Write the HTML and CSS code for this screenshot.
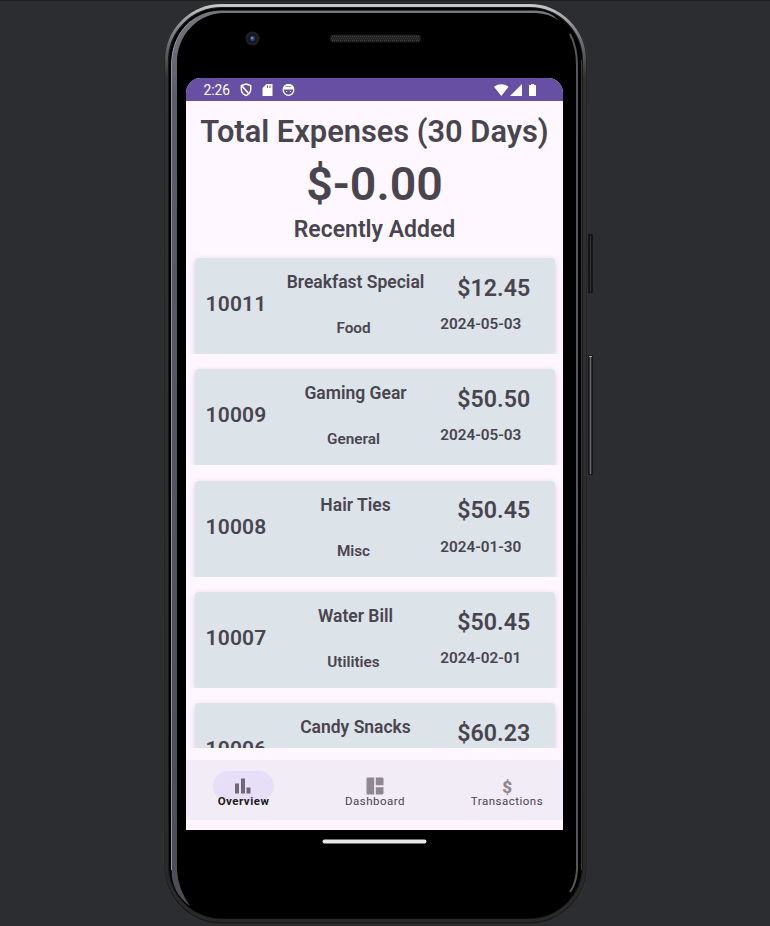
FILE: index.html
```html
<!DOCTYPE html>
<html lang="en">
<head>
<meta charset="utf-8">
<title>Expenses</title>
<link rel="stylesheet" href="styles.css">
</head>
<body>
<div class="device">
  <svg class="frame" width="770" height="926" viewBox="0 0 770 926" fill="none">
    <defs>
      <linearGradient id="rim" x1="0" y1="0" x2="0" y2="1">
        <stop offset="0" stop-color="#c5c7c9"/><stop offset=".025" stop-color="#85878b"/><stop offset=".08" stop-color="#303030"/><stop offset="1" stop-color="#292929"/>
      </linearGradient>
      <linearGradient id="edge" gradientUnits="userSpaceOnUse" x1="0" y1="10" x2="0" y2="905">
        <stop offset="0" stop-color="#77787e"/><stop offset=".1" stop-color="#5b5c64"/><stop offset="1" stop-color="#4c4d54"/>
      </linearGradient>
    </defs>
    <path d="M0 .5H770" stroke="#1e1f22"/>
    <rect x="588" y="234" width="5" height="59" rx="1" fill="#151516"/>
    <path d="M590.5 236v56" stroke="#303032"/>
    <rect x="588" y="355" width="5" height="120" rx="1" fill="#171717"/>
    <path d="M590.5 357v117" stroke="#6c6c6c" stroke-width="1.5"/>
    <path d="M589 356.500h3" stroke="#aaa"/>
    <rect x="163" y="2.500" width="425" height="922" rx="58" fill="#303032"/>
    <rect x="164.500" y="3.500" width="422" height="920" rx="57" fill="#191919"/>
    <rect x="166.500" y="5.500" width="418" height="915" rx="55" stroke="url(#rim)" stroke-width="3"/>
    <rect x="169" y="8" width="413" height="910.500" rx="53" fill="#000"/>
    <path d="M171.500 870V66C171.500 33 192 10.500 222 10.500H536Q551 11 558 20Q549 13.500 536 13H222C197 14 177 36 177 62V870Q178 889 190 906Q171.500 893 171.500 870Z" fill="url(#edge)"/>
    <path d="M171.500 870V66C171.500 46 179 31 191 21" stroke="#90939a"/>
    <path d="M570 34Q577 47 577 65V870Q576 884 570 892" stroke="#56575c" stroke-width="2"/>
    <path d="M581.500 60V870" stroke="#3a3a3a"/>
    <circle cx="252.500" cy="38.500" r="7" fill="#202022"/>
    <circle cx="252.500" cy="38.500" r="4.500" fill="#10152b"/>
    <circle cx="252.500" cy="38.500" r="2.500" fill="#34457f"/>
    <circle cx="252" cy="38" r="1" fill="#8694bd"/>
    <rect x="330" y="34.500" width="91" height="8" rx="4" fill="#1c1d1d"/>
    <path d="M332 36.500H420M332 40.500H420" stroke="#424443" stroke-width="1.500" stroke-dasharray="1 1"/>
    <path d="M331 38.500H420" stroke="#393b3a" stroke-width="1.500" stroke-dasharray="1 1"/>
    <rect x="322.500" y="839.500" width="104" height="4" rx="2" fill="#e9e9e9"/>
  </svg>

  <main class="screen">
    <header class="status">
      <span class="clock">2:26</span>
      <svg class="status-left" width="56" height="14" viewBox="0 0 56 14" fill="none">
        <path d="M6 1L10.700 2.600V6.500Q10.500 10.500 6 12.600Q1.500 10.500 1.300 6.500V2.600Z" stroke="#fff" stroke-width="1.400"/>
        <path d="M2 3L9 11" stroke="#fff" stroke-width="1.600"/>
        <path d="M26.500 1H32.500V13H22.500V5Z" fill="#fff"/>
        <path d="M27.500 2.500V5M30 2.500V5" stroke="#674fa3" stroke-width="1"/>
        <circle cx="48.500" cy="7" r="5.300" stroke="#fff" stroke-width="1.300"/>
        <path d="M43 5.500Q43.500 1 48.500 1T54 5.500L53 6.500H44Z" fill="#fff"/>
        <path d="M45.500 3.500H51.500" stroke="#a897cc"/>
        <path d="M46 8.500H47M50 8.500H51" stroke="#fff"/>
      </svg>
      <svg class="status-right" width="44" height="14" viewBox="0 0 44 14" fill="#fff">
        <path d="M0 3.700Q7.300 -1.200 14.600 3.700L7.300 13Z"/>
        <path d="M28 1V13H16Z"/>
        <path d="M37 1H40V2H42V13H35V2H37Z"/>
      </svg>
    </header>

    <section class="summary">
      <h1 class="title">Total Expenses (30 Days)</h1>
      <p class="total">$-0.00</p>
      <h2 class="recent">Recently Added</h2>
    </section>

    <section class="list">
      <div class="slot"><article class="card">
        <span class="id">10011</span>
        <div class="middle"><span class="name">Breakfast Special</span><span class="category">Food</span></div>
        <div class="right"><span class="amount">$12.45</span><span class="date">2024-05-03</span></div>
      </article></div>
      <div class="slot"><article class="card">
        <span class="id">10009</span>
        <div class="middle"><span class="name">Gaming Gear</span><span class="category">General</span></div>
        <div class="right"><span class="amount">$50.50</span><span class="date">2024-05-03</span></div>
      </article></div>
      <div class="slot"><article class="card">
        <span class="id">10008</span>
        <div class="middle"><span class="name">Hair Ties</span><span class="category">Misc</span></div>
        <div class="right"><span class="amount">$50.45</span><span class="date">2024-01-30</span></div>
      </article></div>
      <div class="slot"><article class="card">
        <span class="id">10007</span>
        <div class="middle"><span class="name">Water Bill</span><span class="category">Utilities</span></div>
        <div class="right"><span class="amount">$50.45</span><span class="date">2024-02-01</span></div>
      </article></div>
      <div class="slot"><article class="card">
        <span class="id">10006</span>
        <div class="middle"><span class="name">Candy Snacks</span></div>
        <div class="right"><span class="amount">$60.23</span></div>
      </article></div>
    </section>

    <nav class="nav">
      <a class="tab active">
        <span class="pill"><svg width="16" height="16" viewBox="0 0 16 16" fill="#6f667b"><path d="M0 5.500H4V15.500H0ZM6 .500H10V15.500H6ZM11.500 9.500H15.500V15.500H11.500Z"/></svg></span>
        <span class="label">Overview</span>
      </a>
      <a class="tab">
        <span class="pill"><svg width="18" height="18" viewBox="0 0 18 18" fill="#8f8894"><path d="M1.500 .500H8.200V17.500H.500V1.500ZM9.800 .500H16.500L17.500 1.500V8.200H9.800ZM9.800 10.200H17.500V16.500L16.500 17.500H9.800Z"/></svg></span>
        <span class="label">Dashboard</span>
      </a>
      <a class="tab">
        <span class="pill dollar">$</span>
        <span class="label">Transactions</span>
      </a>
    </nav>
  </main>
</div>
</body>
</html>
```
FILE: styles.css
```css
* { box-sizing: border-box; }
body { margin: 0; background: #2b2d30; font-family: Roboto, sans-serif; color: #49454e; }
h1, h2, p { margin: 0; }
.device { position: relative; width: 770px; height: 926px; overflow: hidden; padding: 78px 207px 96px 186px; }
.frame { position: absolute; left: 0; top: 0; }
.screen { position: relative; display: flex; flex-direction: column; width: 377px; height: 752px; background: #fef7ff; border-radius: 15px 15px 0 0; overflow: hidden; }
.status { display: flex; align-items: center; height: 23px; flex: none; background: #674fa3; color: #fff; padding: 0 25px 0 17px; }
.clock { width: 37px; font-size: 13.800px; line-height: 23px; padding: 1px 0 0 .5px; }
.status-right { margin-left: auto; }
.summary { height: 149px; flex: none; text-align: center; white-space: nowrap; font-weight: 600; }
.title { font-size: 30.800px; line-height: 38px; font-weight: 600; padding-top: 12px; }
.total { font-size: 46.500px; line-height: 54px; padding-top: 6px; height: 65px; font-weight: 650; }
.recent { font-size: 23px; line-height: 28px; font-weight: 600; }
.list { display: flex; flex-direction: column; gap: 11.350px; height: 498px; flex: none; overflow: hidden; }
.slot { height: 100px; flex: none; padding: 4px 8.500px 0 9px; overflow: hidden; }
.slot:first-child { height: 104px; padding-top: 8px; }
.card { display: grid; grid-template-columns: 82px 154px 1fr; height: 97px; border-radius: 4px; background: #dce3e9; box-shadow: 0 2px 6px rgba(80, 30, 70, .2); font-weight: 600; white-space: nowrap; text-align: center; }
.id { font-size: 21px; line-height: 26px; padding-top: 33px; letter-spacing: .2px; }
.middle, .right { display: flex; flex-direction: column; }
.name { font-size: 17.500px; line-height: 24px; padding: 12px 0 0 3px; }
.category { font-size: 15.300px; line-height: 20px; margin-top: 24px; padding-right: 1px; }
.amount { font-size: 23.200px; line-height: 28px; padding: 15.500px 0 0 2px; }
.date { font-size: 15.300px; line-height: 20px; margin-top: 12.500px; padding-right: 24px; }
.nav { display: flex; justify-content: space-between; height: 60px; flex: none; margin-top: 12px; padding: 11px 12px 0 13px; background: #f2ecf6; }
.tab { display: flex; flex-direction: column; align-items: center; width: 88px; font-size: 11.500px; letter-spacing: .5px; }
.pill { display: flex; justify-content: center; align-items: center; width: 61px; height: 30px; border-radius: 15px; }
.active .pill { background: #e7def7; }
.label { margin-top: -8px; line-height: 16px; font-weight: 450; }
.active .label { color: #1c1a21; font-weight: 700; padding-left: 1px; }
.dollar { font-size: 17px; line-height: 18px; font-weight: 900; color: #8f8894; padding: 1px 0 0 1px; }
```
